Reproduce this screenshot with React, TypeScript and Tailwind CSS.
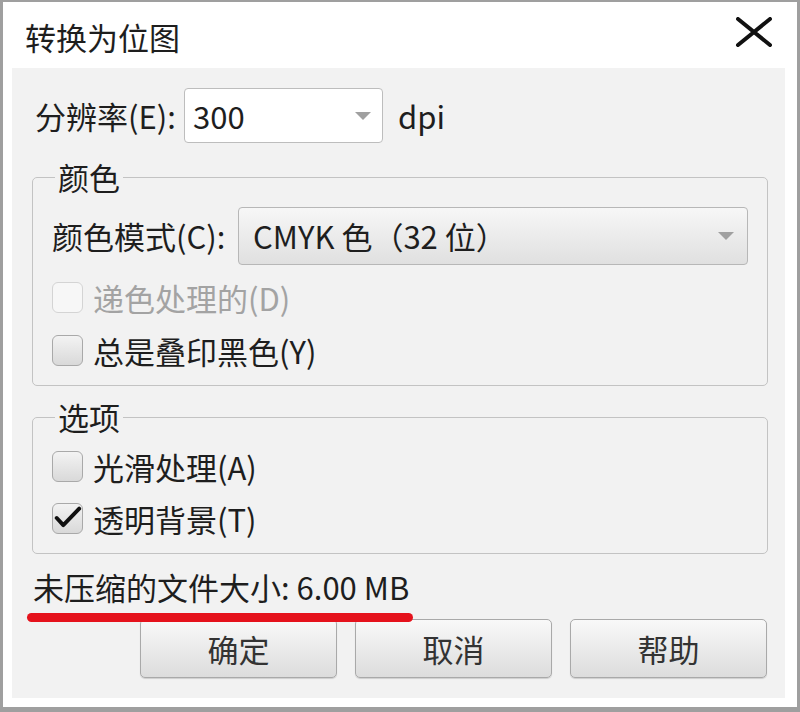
import React from "react";

function Arrow() {
  return (
    <svg width="18" height="10" viewBox="0 0 18 10">
      <polygon points="1,1 17,1 9,9" fill="#a0a0a0" />
    </svg>
  );
}

function CheckBox({ checked, disabled }: { checked?: boolean; disabled?: boolean }) {
  return (
    <div
      className={
        disabled
          ? "w-[31px] h-[31px] rounded-[6px] border border-[#d4d4d4] bg-[#f7f7f7] flex items-center justify-center"
          : "w-[31px] h-[31px] rounded-[6px] border border-[#a9a9a9] bg-linear-to-b from-[#f3f3f3] to-[#d9d9d9] flex items-center justify-center"
      }
    >
      {checked && (
        <svg width="31" height="31" viewBox="0 0 31 31">
          <path d="M4 15 L11 22.5 L28 5" fill="none" stroke="#111" strokeWidth="4.2" strokeLinecap="round" strokeLinejoin="round" />
        </svg>
      )}
    </div>
  );
}

function CheckRow({ label, checked, disabled }: { label: string; checked?: boolean; disabled?: boolean }) {
  return (
    <div className="flex items-center h-[31px] gap-[10px]">
      <CheckBox checked={checked} disabled={disabled} />
      <span className={disabled ? "text-[#a3a3a3]" : "text-[#1e1e1e]"}>{label}</span>
    </div>
  );
}

function Btn({ label }: { label: string }) {
  return (
    <div className="w-[197px] h-[59px] rounded-[5px] border border-[#a9a9a9] bg-linear-to-b from-[#f9f9f9] to-[#dcdcdc] shadow-[0_1px_1px_rgba(0,0,0,0.15)] flex items-center justify-center text-[#333]">
      {label}
    </div>
  );
}

export default function App() {
  return (
    <div className="w-[800px] h-[712px] bg-white border-t-2 border-l-[3px] border-r-[3px] border-b-[5px] border-[#9f9f9f] flex flex-col pl-[9px] pr-[12px] pb-[9px] font-['Noto_Sans_CJK_SC',sans-serif] text-[31px] leading-[36px] text-[#1e1e1e]">
      {/* title bar */}
      <div className="h-[66px] flex items-center justify-between pl-[13px] pr-[12px] pt-[4px]">
        <span>转换为位图</span>
        <svg width="38" height="30" viewBox="0 0 38 30" className="-mt-[10px]">
          <path d="M3 2 L35 28 M35 2 L3 28" stroke="#111" strokeWidth="4" strokeLinecap="round" />
        </svg>
      </div>

      {/* panel */}
      <div className="relative flex-1 bg-[#f2f2f2] flex flex-col pt-[20px] pb-[20px]">
        {/* resolution row */}
        <div className="flex items-center h-[55px] pl-[23px]">
          <span className="w-[149px]">分辨率(E):</span>
          <div className="w-[199px] h-[55px] bg-white border border-[#bdbdbd] rounded-[4px] flex items-center justify-between pl-[8px] pr-[10px]">
            <span>300</span>
            <Arrow />
          </div>
          <span className="ml-[15px]">dpi</span>
        </div>

        {/* color group */}
        <fieldset className="mt-[16px] ml-[20px] mr-[17px] border border-[#c3c3c3] rounded-[5px] px-[19px] pt-[12px] pb-[19px] flex flex-col">
          <legend className="ml-[3px] px-[3px]">颜色</legend>
          <div className="flex items-center h-[58px]">
            <span className="w-[186px]">颜色模式(C):</span>
            <div className="flex-1 h-[58px] rounded-[4px] border border-[#b7b7b7] bg-linear-to-b from-[#f7f7f7] to-[#e0e0e0] flex items-center justify-between pl-[14px] pr-[12px]">
              <span>CMYK 色（32 位）</span>
              <Arrow />
            </div>
          </div>
          <div className="mt-[17px]">
            <CheckRow label="递色处理的(D)" disabled />
          </div>
          <div className="mt-[22px]">
            <CheckRow label="总是叠印黑色(Y)" />
          </div>
        </fieldset>

        {/* options group */}
        <fieldset className="mt-[13px] ml-[20px] mr-[17px] border border-[#c3c3c3] rounded-[5px] px-[19px] pt-[16px] pb-[19px] flex flex-col">
          <legend className="ml-[3px] px-[3px]">选项</legend>
          <CheckRow label="光滑处理(A)" />
          <div className="mt-[21px]">
            <CheckRow label="透明背景(T)" checked />
          </div>
        </fieldset>

        {/* file size */}
        <div className="mt-[15px] pl-[21px] h-[36px]">未压缩的文件大小: 6.00 MB</div>

        {/* buttons */}
        <div className="mt-[14px] flex justify-end gap-[18px] pr-[18px]">
          <Btn label="确定" />
          <Btn label="取消" />
          <Btn label="帮助" />
        </div>

        {/* red annotation underline */}
        <div className="absolute left-[15px] top-[545px] w-[386px] h-[9px] rounded-full bg-[#e5121c]" />
      </div>
    </div>
  );
}
